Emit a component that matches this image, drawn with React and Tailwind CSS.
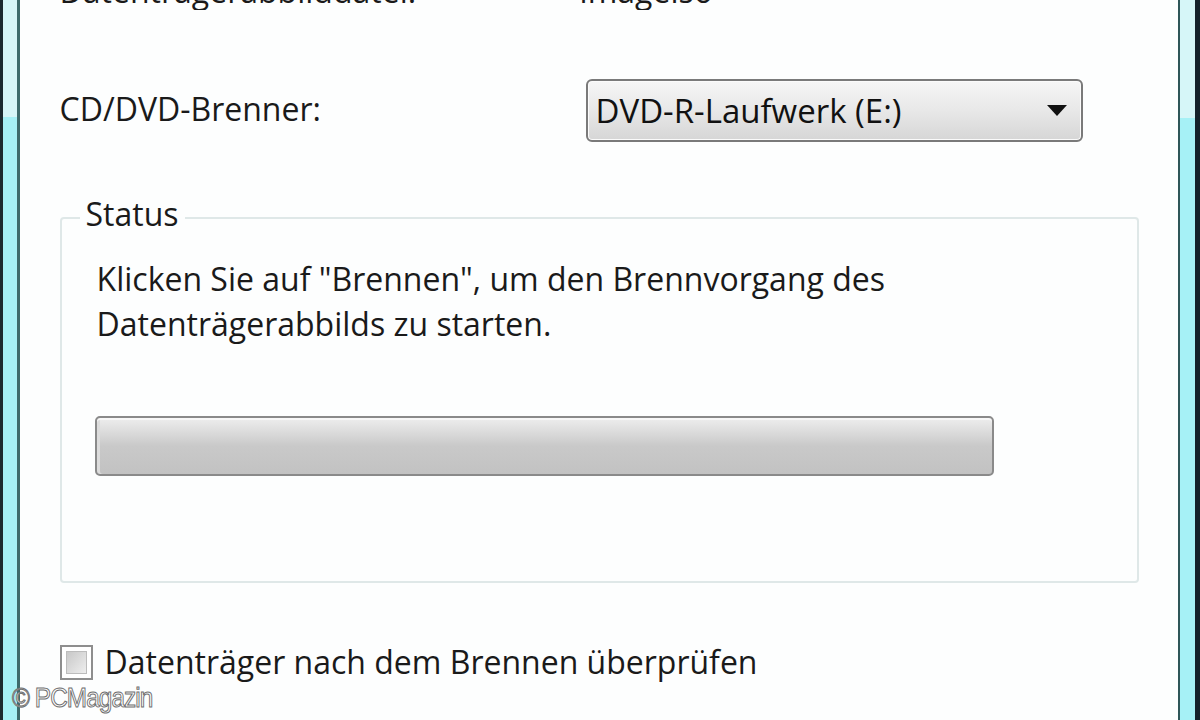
export default function App() {
  const font = { fontFamily: '"Open Sans", "Noto Sans", sans-serif' };
  return (
    <div className="relative w-[1200px] h-[720px] overflow-hidden bg-white flex" style={font}>
      {/* left frame */}
      <div className="w-[3px] h-full bg-[#1c2b30]" />
      <div className="w-[14px] h-full flex flex-col">
        <div className="h-[117px] bg-[#d6f6f8]" />
        <div className="flex-1 bg-[#a6f1f6]" />
      </div>
      <div className="w-[3px] h-full bg-[#3d6b6c]" />

      {/* content */}
      <div className="flex-1 bg-[#fdfefe] flex flex-col pl-[40px] pr-[39px] text-[#1a1a1a]">
        <div className="h-[10px] relative overflow-hidden">
          <div className="absolute left-0 top-[-26px] text-[32px] leading-[34px] whitespace-nowrap">Datenträgerabbilddatei:</div>
          <div className="absolute left-[520px] top-[-26px] text-[32px] leading-[34px] whitespace-nowrap">imageiso</div>
        </div>
        <div className="h-[69px]" />
        <div className="flex items-center h-[63px]">
          <div className="w-[526px] text-[32px] leading-[38px] pb-[4px]">CD/DVD-Brenner:</div>
          <div className="w-[497px] h-[63px] rounded-[6px] border-2 border-[#7a7a7a] bg-gradient-to-b from-[#f6f6f6] via-[#e8e8e8] to-[#d6d6d6] flex items-center pl-[8px] pr-[14px] shadow-[inset_0_0_0_1px_#fbfbfb]">
            <div className="flex-1 text-[33px] leading-[38px] text-[#111]">DVD-R-Laufwerk (E:)</div>
            <svg width="20" height="12" viewBox="0 0 20 12"><path d="M0 0 L20 0 L10 11 Z" fill="#111" /></svg>
          </div>
        </div>
        <div className="h-[75px]" />
        <div className="relative w-[1079px] h-[366px] shrink-0 rounded-[4px] border-2 border-[#dfe8e8] pl-[35px] pt-[37px]">
          <div className="absolute left-[18px] top-[-24px] bg-[#fdfefe] px-[6px] text-[32px] leading-[38px]">Status</div>
          <div className="text-[32px] leading-[45px]">
            Klicken Sie auf "Brennen", um den Brennvorgang des<br />Datenträgerabbilds zu starten.
          </div>
          <div className="mt-[70px] ml-[-2px] w-[899px] h-[60px] rounded-[5px] border-2 border-[#8a8a8a] bg-gradient-to-b from-[#eeeeee] via-[#c9c9c9] to-[#c2c2c2] shadow-[inset_0_2px_0_#f8f8f8,inset_3px_0_0_#dcdcdc]" />
        </div>
        <div className="h-[61px] shrink-0" />
        <div className="flex items-center gap-[12px]">
          <div className="w-[33px] h-[35px] shrink-0 border-2 border-[#8e8e8e] bg-white p-[4px]">
            <div className="w-full h-full bg-gradient-to-br from-[#c8c8c8] to-[#eeeeee] border border-[#bcbcbc]" />
          </div>
          <div className="text-[32px] leading-[36px] whitespace-nowrap">Datenträger nach dem Brennen überprüfen</div>
        </div>
      </div>

      {/* right frame */}
      <div className="w-[3px] h-full bg-[#2e5658]" />
      <div className="w-[15px] h-full flex flex-col">
        <div className="h-[118px] bg-[#d6f6f8]" />
        <div className="flex-1 bg-[#a6f1f6]" />
      </div>
      <div className="w-[5px] h-full bg-[#14212a]" />

      {/* watermark */}
      <div
        className="absolute left-[12px] top-[683px] text-[27px] leading-[30px] text-white tracking-[-1px] whitespace-nowrap"
        style={{ fontFamily: '"Liberation Sans", Arial, sans-serif', WebkitTextStroke: '1px #6e6e6e', transform: 'scaleX(0.9)', transformOrigin: 'left' }}
      >
        © PCMagazin
      </div>
    </div>
  );
}
